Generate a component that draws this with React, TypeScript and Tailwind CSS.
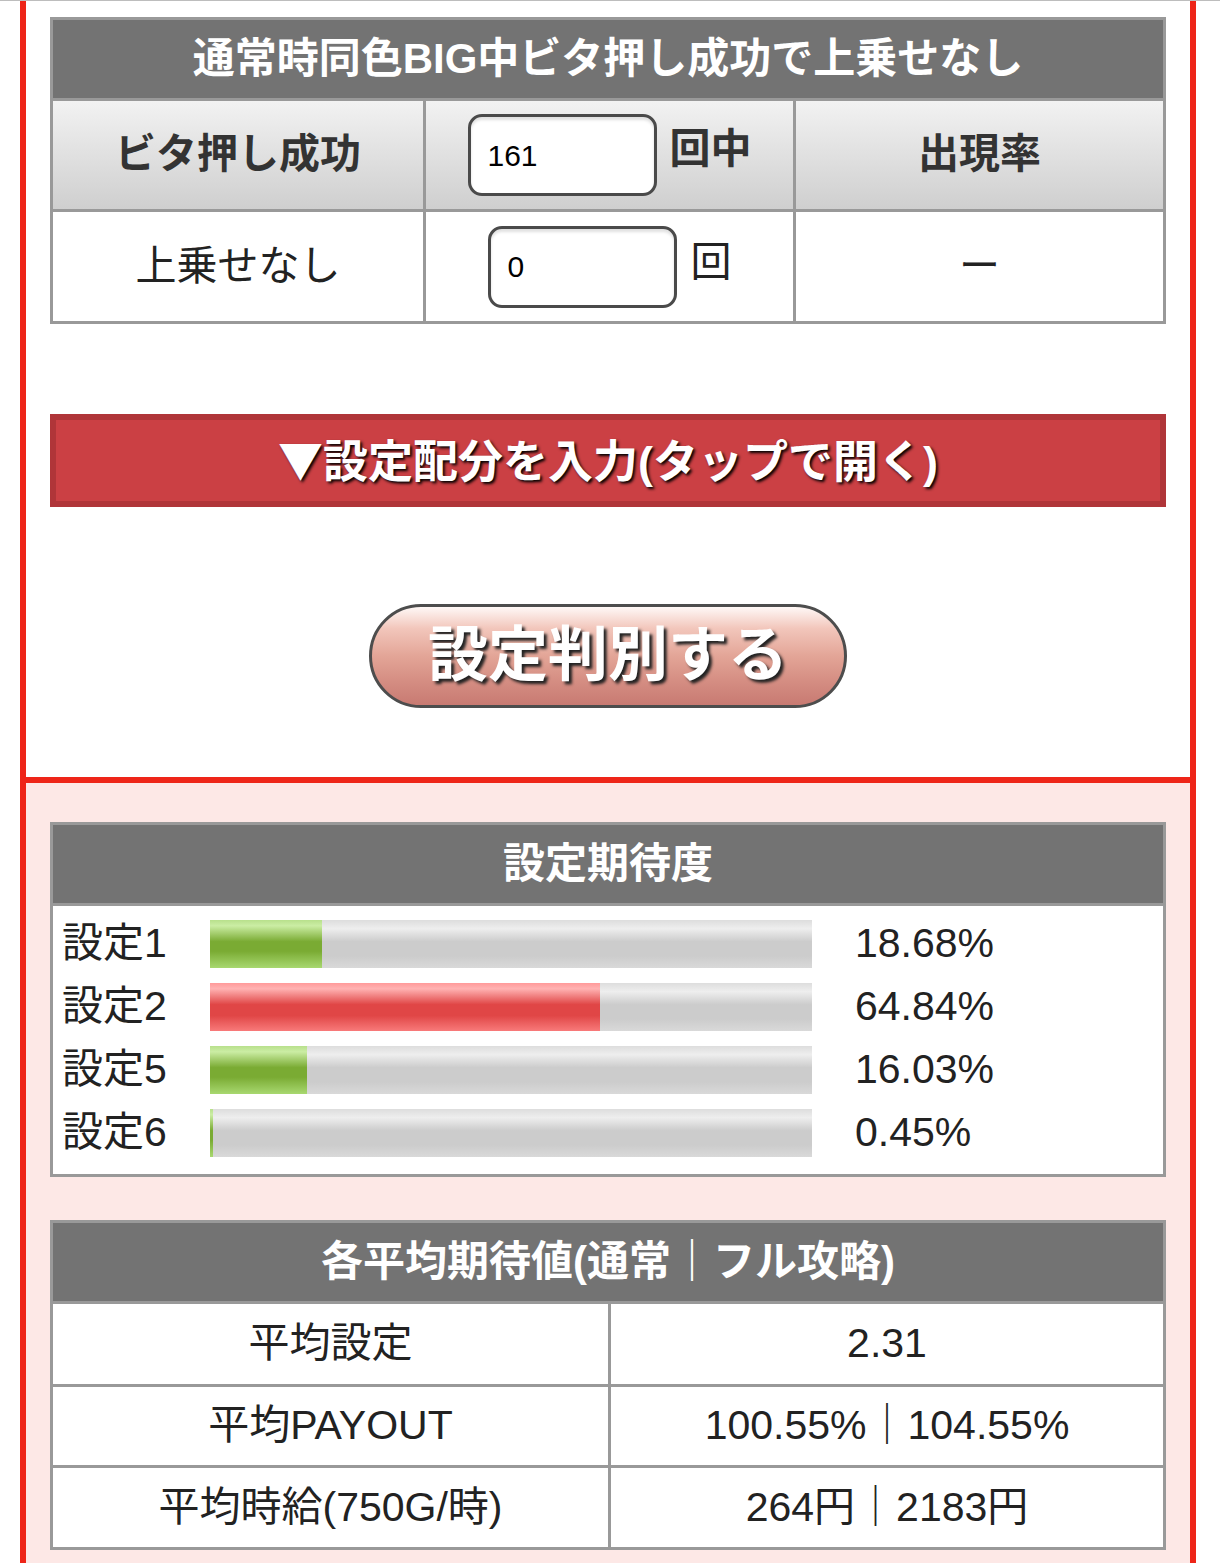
import React from "react";

const font = "font-['Liberation_Sans','Noto_Sans_CJK_JP',sans-serif]";

const settings = [
  { label: "設定1", rate: 18.68, color: "green" },
  { label: "設定2", rate: 64.84, color: "red" },
  { label: "設定5", rate: 16.03, color: "green" },
  { label: "設定6", rate: 0.45, color: "green" },
];

const averages = [
  { label: "平均設定", value: "2.31", h: "h-[83px]" },
  { label: "平均PAYOUT", value: "100.55%｜104.55%", h: "h-[81px]" },
  { label: "平均時給(750G/時)", value: "264円｜2183円", h: "h-[82px]" },
];

function TableHead({ children }: { children: React.ReactNode }) {
  return (
    <div className="h-[78px] bg-[#737373] flex items-center justify-center text-white font-bold text-[42px] leading-none">
      {children}
    </div>
  );
}

function NumberInput({ value }: { value: string }) {
  return (
    <div className="w-[189px] h-[82px] border-[3px] border-[#4a4a4a] rounded-[14px] bg-white shadow-[inset_0_3px_3px_rgba(0,0,0,0.12)] flex items-center pl-[17px] text-[30px] font-normal text-black">
      {value}
    </div>
  );
}

function Bar({ rate, color }: { rate: number; color: string }) {
  const fill =
    color === "red"
      ? "bg-[linear-gradient(to_bottom,#ff9a9a_0%,#ffb2b2_12%,#e04646_45%,#e04646_68%,#f87a7a_100%)]"
      : "bg-[linear-gradient(to_bottom,#b8e08c_0%,#cbeda4_12%,#7aab33_45%,#7aab33_65%,#a8d870_100%)]";
  return (
    <div className="w-[602px] h-[48px] flex bg-[linear-gradient(to_bottom,#dddddd_0%,#eeeeee_18%,#cccccc_45%,#cccccc_75%,#d9d9d9_100%)]">
      <div className={fill} style={{ width: `${rate}%` }} />
    </div>
  );
}

export default function App() {
  return (
    <div className={`${font} min-h-screen bg-white border-t border-[#bdbdbd] text-[#222]`}>
      <div className="ml-[20px] w-[1176px] border-x-[6px] border-[#ee2518]">
        {/* input area */}
        <section className="bg-white px-[24px] pt-[16px] pb-[69px]">
          <div className="border-[3px] border-[#999]">
            <TableHead>通常時同色BIG中ビタ押し成功で上乗せなし</TableHead>
            <div className="grid grid-cols-3 h-[111px] border-t-[3px] border-[#999] bg-linear-to-b from-[#f2f2f2] to-[#cfcfcf] text-[41px] font-bold text-[#333]">
              <div className="flex items-center justify-center">ビタ押し成功</div>
              <div className="flex items-center justify-center gap-[13px] border-l-[3px] border-[#999]">
                <NumberInput value="161" />
                <span className="mb-[10px]">回中</span>
              </div>
              <div className="flex items-center justify-center border-l-[3px] border-[#999]">出現率</div>
            </div>
            <div className="grid grid-cols-3 h-[112px] border-t-[3px] border-[#999] bg-white text-[41px] text-[#222]">
              <div className="flex items-center justify-center">上乗せなし</div>
              <div className="flex items-center justify-center gap-[14px] border-l-[3px] border-[#999]">
                <NumberInput value="0" />
                <span className="mb-[8px]">回</span>
              </div>
              <div className="flex items-center justify-center border-l-[3px] border-[#999]">ー</div>
            </div>
          </div>

          <button className="mt-[90px] w-full h-[93px] border-[6px] border-[#b03539] bg-[#cb4044] text-white font-bold text-[45px] leading-none [text-shadow:2px_2px_3px_#000]">
            <span className="font-['Noto_Sans_CJK_JP',sans-serif]">▼</span>設定配分を入力(タップで開く)
          </button>

          <div className="mt-[97px] flex justify-center">
            <button className="w-[478px] h-[104px] rounded-full border-[3px] border-[#4d4d4d] bg-[linear-gradient(to_bottom,#fff8f6_0%,#f2c6bb_22%,#e3a597_50%,#d58e83_75%,#c87a72_100%)] text-white font-bold text-[60px] leading-none [text-shadow:3px_3px_3px_#222]">
              設定判別する
            </button>
          </div>
        </section>

        <div className="h-[6px] bg-[#ee2518]" />

        {/* result area */}
        <section className="bg-[#fde8e6] px-[24px] pt-[39px] pb-[40px]">
          <div className="border-[3px] border-[#999] bg-white">
            <TableHead>設定期待度</TableHead>
            <div className="border-t-[3px] border-[#999] pt-[14px] pb-[17px] flex flex-col gap-[15px]">
              {settings.map((s) => (
                <div key={s.label} className="flex items-center h-[48px] text-[41px]">
                  <span className="w-[157px] pl-[9px]">{s.label}</span>
                  <Bar rate={s.rate} color={s.color} />
                  <span className="ml-[43px]">{s.rate.toFixed(2)}%</span>
                </div>
              ))}
            </div>
          </div>

          <div className="mt-[43px] border-[3px] border-[#999] bg-white">
            <TableHead>各平均期待値(通常｜フル攻略)</TableHead>
            {averages.map((a) => (
              <div key={a.label} className={`grid grid-cols-2 ${a.h} border-t-[3px] border-[#999] text-[41px]`}>
                <div className="flex items-center justify-center">{a.label}</div>
                <div className="flex items-center justify-center border-l-[3px] border-[#999]">{a.value}</div>
              </div>
            ))}
          </div>
        </section>
      </div>
    </div>
  );
}
